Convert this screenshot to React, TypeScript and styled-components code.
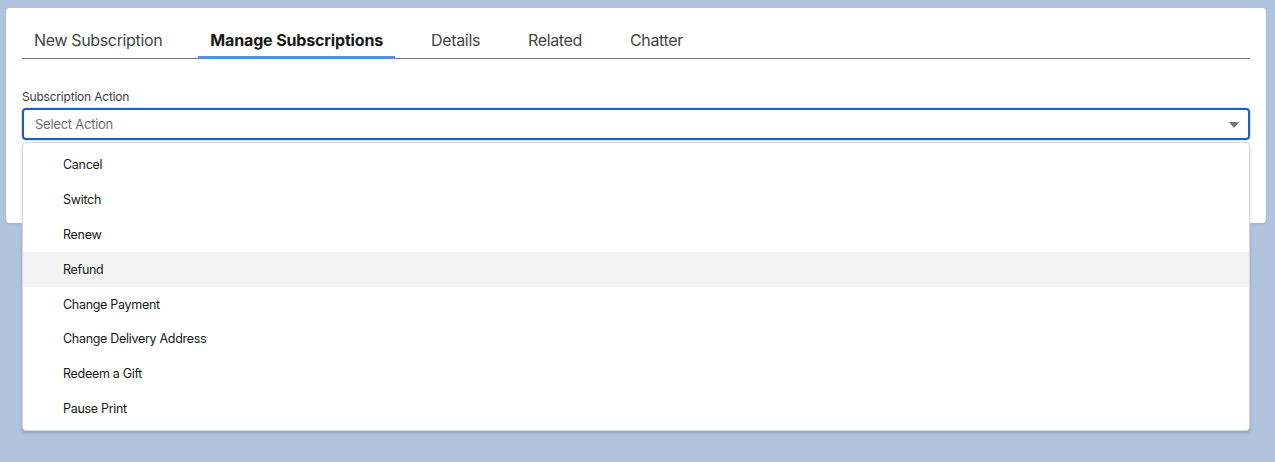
import React from "react";
import styled, { createGlobalStyle } from "styled-components";

const Global = createGlobalStyle`
  html, body { margin: 0; padding: 0; }
  body {
    background: #b0c4df;
    font-family: Inter, "Liberation Sans", sans-serif;
    -webkit-font-smoothing: antialiased;
  }
`;

const Page = styled.div`
  padding: 8px 9px 0 6px;
  height: 462px;
  box-sizing: border-box;
`;

const Card = styled.div`
  background: #ffffff;
  border-radius: 4px;
  padding: 13px 16px 0 16px;
  height: 215px;
  box-sizing: border-box;
  position: relative;
  box-shadow: 0 1px 2px rgba(0, 0, 0, 0.1);
`;

const TabBar = styled.div`
  display: flex;
  gap: 24px;
  border-bottom: 1px solid #747474;
`;

const Tab = styled.div<{ $active?: boolean }>`
  padding: 0 12px;
  height: 38px;
  display: flex;
  align-items: center;
  font-size: 16px;
  letter-spacing: ${(p) => (p.$active ? "-0.15px" : "-0.35px")};
  color: ${(p) => (p.$active ? "#181818" : "#444444")};
  font-weight: ${(p) => (p.$active ? 700 : 400)};
  box-shadow: ${(p) => (p.$active ? "inset 0 -3px 0 #4f8fe8" : "none")};
  margin-bottom: -1px;
  box-sizing: border-box;
`;

const Field = styled.div`
  margin-top: 30px;
  position: relative;
`;

const Label = styled.div`
  font-size: 12px;
  color: #3e3e3c;
  line-height: 16px;
  letter-spacing: -0.2px;
  margin-bottom: 3px;
`;

const Select = styled.div`
  height: 32px;
  border: 2px solid #1b5dc9;
  border-radius: 4px;
  box-sizing: border-box;
  display: flex;
  align-items: center;
  justify-content: space-between;
  padding: 0 9px 0 11px;
  box-shadow: 0 0 0 1px #d8e6fb;
`;

const Placeholder = styled.span`
  font-size: 13px;
  letter-spacing: -0.25px;
  color: #706e6b;
`;

const Caret = styled.span`
  width: 0;
  height: 0;
  border-left: 5px solid transparent;
  border-right: 5px solid transparent;
  border-top: 6px solid #747474;
  margin-top: 2px;
`;

const Menu = styled.ul`
  list-style: none;
  margin: 0;
  position: absolute;
  left: 0;
  right: 0;
  top: 53px;
  padding: 4px 0;
  background: #ffffff;
  border: 1px solid #d8d8d8;
  border-radius: 4px;
  box-shadow: 0 2px 3px rgba(0, 0, 0, 0.16);
  z-index: 2;
`;

const Item = styled.li<{ $hover?: boolean }>`
  height: 34.9px;
  display: flex;
  align-items: center;
  padding-left: 40px;
  font-size: 12.5px;
  letter-spacing: -0.3px;
  color: #181818;
  background: ${(p) => (p.$hover ? "#f3f3f3" : "transparent")};
`;

const tabs = ["New Subscription", "Manage Subscriptions", "Details", "Related", "Chatter"];
const items = [
  "Cancel",
  "Switch",
  "Renew",
  "Refund",
  "Change Payment",
  "Change Delivery Address",
  "Redeem a Gift",
  "Pause Print",
];

export default function App() {
  return (
    <>
      <Global />
      <Page>
        <Card>
          <TabBar>
            {tabs.map((t) => (
              <Tab key={t} $active={t === "Manage Subscriptions"}>
                {t}
              </Tab>
            ))}
          </TabBar>
          <Field>
            <Label>Subscription Action</Label>
            <Select>
              <Placeholder>Select Action</Placeholder>
              <Caret />
            </Select>
            <Menu>
              {items.map((i) => (
                <Item key={i} $hover={i === "Refund"}>
                  {i}
                </Item>
              ))}
            </Menu>
          </Field>
        </Card>
      </Page>
    </>
  );
}
